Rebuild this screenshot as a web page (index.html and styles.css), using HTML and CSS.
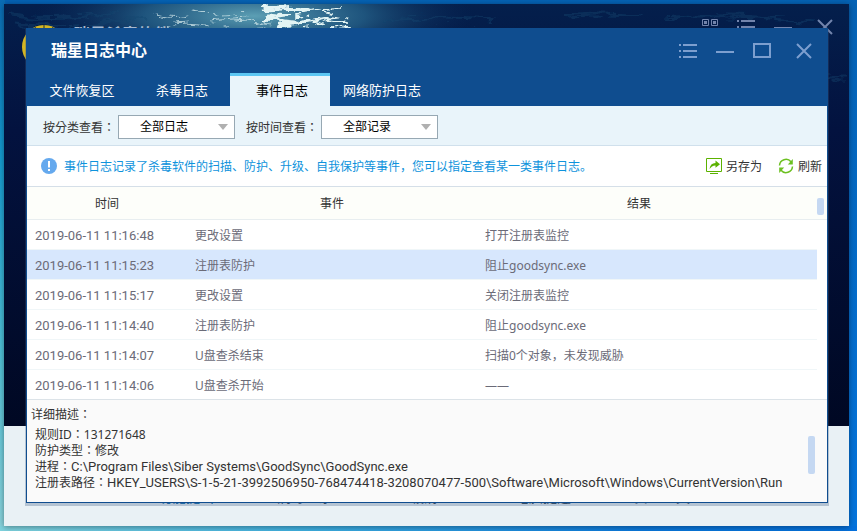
FILE: index.html
```html
<!DOCTYPE html>
<html lang="zh-CN">
<head>
    <meta charset="UTF-8">
    <meta name="viewport" content="width=device-width, initial-scale=1.0">
    <title>瑞星日志中心</title>
    <link rel="stylesheet" href="styles.css">
</head>
<body>
    <div class="main-window">
        <div class="main-banner">
            <svg class="sea" viewBox="0 0 845 422" preserveAspectRatio="none" aria-hidden="true">
                <defs>
                    <linearGradient id="deep" x1="0" y1="0" x2="0" y2="1">
                        <stop offset="0" stop-color="#041f4c"/>
                        <stop offset="0.3" stop-color="#03123f"/>
                        <stop offset="1" stop-color="#000823"/>
                    </linearGradient>
                    <radialGradient id="glow">
                        <stop offset="0" stop-color="#5c9fb4"/>
                        <stop offset="0.5" stop-color="#25628a" stop-opacity="0.8"/>
                        <stop offset="1" stop-color="#0a2c5c" stop-opacity="0"/>
                    </radialGradient>
                    <filter id="ripple" x="-5%" y="-20%" width="110%" height="140%">
                        <feTurbulence type="fractalNoise" baseFrequency="0.06 0.16" numOctaves="3" seed="4"/>
                        <feDisplacementMap in="SourceGraphic" scale="14" xChannelSelector="R" yChannelSelector="G"/>
                    </filter>
                </defs>
                <rect width="845" height="422" fill="url(#deep)"/>
                <ellipse cx="250" cy="12" rx="220" ry="50" fill="url(#glow)"/>
                <g filter="url(#ripple)" fill="none" stroke="#e2f4f4" stroke-linecap="round">
                    <path d="M190 8l28 4 26-2M206 18l36-3 24 4M150 10q20 6 34 2M160 22q26-6 44 0M220 26l40-2" stroke-width="1" opacity="0.7"/>
                    <path d="M262 6l30-2 14 3M264 13l26 3M276 21l30-5" stroke-width="5"/>
                    <path d="M292 11l22-5 14 3M300 20l24-5 20 3M320 4l14-1M300 27l26-3 20 1M250 28l30-3" stroke-width="2"/>
                </g>
                <g filter="url(#ripple)" fill="none" stroke="#12466f" stroke-width="3" opacity="0.4">
                    <path d="M4 10q40 8 110-2M10 20q50 6 130-6M380 16q50-4 110 0M560 12q30-4 80 0M660 14q60-6 150 4M802 74h40"/>
                </g>
            </svg>
            <header class="main-head">
                <svg class="main-logo" width="44" height="44" viewBox="0 0 44 44" aria-hidden="true">
                    <circle cx="22" cy="22" r="19" fill="none" stroke="#d3b523" stroke-width="6"/>
                    <path d="M22 0v8M13 2l3 7M31 2l-3 7" stroke="#1b2a38" stroke-width="1"/>
                </svg>
                <span class="main-title">瑞星杀毒软件</span>
                <div class="main-controls">
                    <svg width="16" height="7" viewBox="0 0 16 7" aria-hidden="true"><path d="M.5 .5h6v6h-6zM9.500 .5h6v6h-6z" fill="none" stroke="currentColor"/><path d="M2 2h3v3H2zM11 2h3v3h-3z" fill="currentColor"/></svg>
                    <svg width="18" height="14" viewBox="0 0 18 14" aria-hidden="true"><path d="M0 1h2v2H0zM4 1h14v2H4zM0 7h2v2H0zM4 7h14v2H4z" fill="currentColor"/></svg>
                    <svg class="low" width="18" height="2" viewBox="0 0 18 2" aria-hidden="true"><path d="M0 0h18v2H0z" fill="currentColor"/></svg>
                    <svg class="close" width="16" height="16" viewBox="0 0 16 16" aria-hidden="true"><path d="M1 1l14 14M15 1L1 15" stroke="currentColor" stroke-width="2"/></svg>
                </div>
            </header>
        </div>
        <nav class="main-nav">
            <a class="current" href="#">功能提出</a>
            <a href="#">病毒查杀</a>
            <a href="#">垃圾清理</a>
            <a href="#">电脑提速</a>
            <a href="#">安全工具</a>
        </nav>
    </div>

    <div class="log-window">
        <header class="log-head">
            <h1>瑞星日志中心</h1>
            <div class="controls">
                <button type="button" aria-label="菜单">
                    <svg width="18" height="14" viewBox="0 0 18 14"><path d="M0 0h2v2H0zM4 0h14v2H4zM0 6h2v2H0zM4 6h14v2H4zM0 12h2v2H0zM4 12h14v2H4z" fill="currentColor"/></svg>
                </button>
                <button type="button" aria-label="最小化">
                    <svg width="18" height="16" viewBox="0 0 18 16"><path d="M0 8h18v2H0z" fill="currentColor"/></svg>
                </button>
                <button type="button" aria-label="最大化">
                    <svg width="18" height="16" viewBox="0 0 18 16"><path d="M1 1h16v13H1z" fill="none" stroke="currentColor" stroke-width="2"/></svg>
                </button>
                <button type="button" class="close" aria-label="关闭">
                    <svg width="16" height="16" viewBox="0 0 16 16"><path d="M1 1l14 14M15 1L1 15" stroke="currentColor" stroke-width="2"/></svg>
                </button>
            </div>
        </header>

        <nav class="tabs">
            <button type="button">文件恢复区</button>
            <button type="button">杀毒日志</button>
            <button type="button" class="active">事件日志</button>
            <button type="button">网络防护日志</button>
        </nav>

        <form class="filters">
            <label for="kind">按分类查看：</label>
            <div class="select">
                <select id="kind">
                    <option>全部日志</option>
                </select>
            </div>
            <label for="time">按时间查看：</label>
            <div class="select">
                <select id="time">
                    <option>全部记录</option>
                </select>
            </div>
        </form>

        <div class="notice">
            <svg width="16" height="16" viewBox="0 0 16 16" aria-hidden="true"><circle cx="8" cy="8" r="8" fill="#65a9ee"/><path d="M7 3h2v6.500H7zM7 11h2v2H7z" fill="#fff"/></svg>
            <p>事件日志记录了杀毒软件的扫描、防护、升级、自我保护等事件，您可以指定查看某一类事件日志。</p>
            <div class="actions">
                <button type="button">
                    <svg width="16" height="16" viewBox="0 0 16 16" aria-hidden="true"><path d="M.5 .5h15v13H.5z" fill="none" stroke="#5cb200"/><path d="M4 15h8v1H4z" fill="#5cb200"/><path d="M3.500 11C4 7 6 5 9.500 5V2.500L14 6.200l-4.500 3.500V7.500C7 7.400 5 9 3.500 11z" fill="#5cb200"/></svg>
                    另存为
                </button>
                <button type="button">
                    <svg width="16" height="16" viewBox="0 0 16 16" aria-hidden="true"><path d="M1.500 7.500A6.500 6.500 0 0 1 13 3.800M14.500 8.500A6.500 6.500 0 0 1 3 12.200" fill="none" stroke="#6cc021" stroke-width="1.500"/><path d="M14.800 1v5.500H9.800zM1.200 15V9.500h5z" fill="#6cc021"/></svg>
                    刷新
                </button>
            </div>
        </div>

        <table>
            <thead>
                <tr>
                    <th class="col-time">时间</th>
                    <th class="col-event">事件</th>
                    <th class="col-result">结果</th>
                    <td class="col-scroll"><span class="thumb"></span></td>
                </tr>
            </thead>
            <tbody>
                <tr><td class="stamp">2019-06-11 11:16:48</td><td>更改设置</td><td>打开注册表监控</td></tr>
                <tr class="selected"><td class="stamp">2019-06-11 11:15:23</td><td>注册表防护</td><td>阻止goodsync.exe</td></tr>
                <tr><td class="stamp">2019-06-11 11:15:17</td><td>更改设置</td><td>关闭注册表监控</td></tr>
                <tr><td class="stamp">2019-06-11 11:14:40</td><td>注册表防护</td><td>阻止goodsync.exe</td></tr>
                <tr><td class="stamp">2019-06-11 11:14:07</td><td>U盘查杀结束</td><td>扫描0个对象，未发现威胁</td></tr>
                <tr><td class="stamp">2019-06-11 11:14:06</td><td>U盘查杀开始</td><td>——</td></tr>
            </tbody>
        </table>

        <section class="detail">
            <div class="detail-text">
                <h2>详细描述：</h2>
                <p>规则ID：131271648</p>
                <p>防护类型：修改</p>
                <p>进程：<span class="path">C:\Program Files\Siber Systems\GoodSync\GoodSync.exe</span></p>
                <p>注册表路径：<span class="path">HKEY_USERS\S-1-5-21-3992506950-768474418-3208070477-500\Software\Microsoft\Windows\CurrentVersion\Run</span></p>
            </div>
            <span class="thumb tall"></span>
        </section>
    </div>
</body>
</html>
```

FILE: styles.css
```css
* {
    box-sizing: border-box;
    margin: 0;
    padding: 0;
}
body {
    font-family: 'Noto Sans', 'Noto Sans CJK SC', sans-serif;
    font-size: 12px;
    min-height: 100vh;
    position: relative;
    overflow: hidden;
    color: #333;
    background:
        linear-gradient(to right, #7fd3de 0, #3fb0e0 35%, #0a78dc 75%, #0470dc 100%) bottom / 100% 5px no-repeat,
        linear-gradient(to bottom, #0a6cb4, #159bd0 30%, #4dbfd6 65%, #8ad3dc) left / 5px 100% no-repeat,
        linear-gradient(to bottom, #0562b4, #0474dc);
}
button, select {
    font: inherit;
    color: inherit;
    border: none;
    background: none;
    cursor: pointer;
}
svg {
    display: block;
    flex: none;
}

/* windows on the desktop */
.main-window {
    position: absolute;
    top: 4px;
    left: 4px;
    right: 8px;
    bottom: 5px;
    display: flex;
    flex-direction: column;
    background-color: #e9f1f5;
    box-shadow: 0 1px 6px rgba(0, 0, 0, 0.4);
}
.log-window {
    position: absolute;
    top: 28px;
    left: 26px;
    right: 29px;
    border: 1px solid #0f4d8f;
    border-top: none;
    background-color: #fff;
    box-shadow: 0 2px 0 1px rgba(60, 90, 130, 0.3);
}

.main-banner {
    position: relative;
    flex: 1;
}
.sea {
    position: absolute;
    width: 100%;
    height: 100%;
}
.main-head {
    position: relative;
    display: flex;
    padding: 15px 16px 0 18px;
    color: #7284ac;
}
.main-logo {
    margin-top: 6px;
}
.main-title {
    margin: 5px 0 0 8px;
    font-size: 16px;
    line-height: 20px;
    font-weight: bold;
    color: #a5b8cf;
}
.main-controls {
    display: flex;
    gap: 19px;
    margin-left: auto;
}
.main-controls .low {
    margin-top: 8px;
}
.main-nav {
    display: flex;
    gap: 63px;
    height: 100px;
    padding: 61px 0 0 154px;
    font-size: 14px;
    line-height: 20px;
}
.main-nav a {
    color: #34495e;
    text-decoration: none;
}
.main-nav .current {
    color: #1670b0;
}

/* title bar and tabs */
.log-head {
    display: flex;
    justify-content: space-between;
    height: 45px;
    padding: 0 15px 0 24px;
    line-height: 45px;
    background-color: #0f4d8f;
}
.log-head h1 {
    font-size: 16px;
    color: #fff;
}
.controls {
    display: flex;
    align-items: center;
    gap: 19px;
    color: #7d9fcf;
}
.close {
    margin-left: 6px;
}
.tabs {
    display: flex;
    height: 33px;
    padding-left: 3px;
    background-color: #0f4d8f;
}
.tabs button {
    width: 100px;
    padding: 0 0 4px 4px;
    border-top: 3px solid transparent;
    font-size: 13px;
    color: #fff;
}
.tabs .active {
    border-top-color: #5cc6f2;
    background-color: #e9f4fa;
    color: #000;
}

/* filters */
.filters {
    display: flex;
    align-items: center;
    height: 40px;
    padding: 2px 16px 0;
    border-bottom: 1px solid #d0e0ec;
    background-color: #e9f4fa;
}
/* full-width colons sit in the middle of their cell */
.filters label, .detail {
    font-family: 'Noto Sans', 'Noto Sans CJK TC', sans-serif;
    -webkit-locale: "zh-Hant";
}
.select {
    position: relative;
    width: 117px;
    margin: 0 11px 0 3px;
}
.select::after {
    content: '';
    position: absolute;
    top: 9px;
    right: 7px;
    border: 5px solid transparent;
    border-top: 6px solid #b0b0b0;
    pointer-events: none;
}
.select select {
    appearance: none;
    width: 100%;
    height: 24px;
    padding-left: 21px;
    border: 1px solid #97a8b3;
    background-color: #fff;
    color: #000;
}

/* notice */
.notice {
    display: flex;
    align-items: center;
    height: 41px;
    padding: 0 5px 0 14px;
    border-bottom: 1px solid #d5dfe8;
}
.notice p {
    margin-left: 7px;
    color: #0e93dc;
}
.actions {
    display: flex;
    gap: 16px;
    margin-left: auto;
}
.actions button {
    display: flex;
    align-items: center;
    gap: 4px;
}

/* log table */
table {
    width: 100%;
    table-layout: fixed;
    border-collapse: separate;
    border-spacing: 0;
}
.col-time {
    width: 160px;
}
.col-event {
    width: 290px;
}
.col-result {
    padding-right: 16px;
}
.col-scroll {
    width: 10px;
}
thead th, thead td {
    height: 33px;
    border-bottom: 1px solid #e8eef0;
    background-color: #fdfefa;
    font-weight: normal;
}
tbody td {
    height: 30px;
    padding: 1px 0 0 8px;
    border-bottom: 1px solid #f0f6f8;
    color: #6b6b78;
}
tbody .stamp {
    font-family: Roboto, sans-serif;
    font-size: 13px;
}
tbody .selected td {
    background-color: #d7e7fd;
}
.thumb {
    display: block;
    width: 7px;
    height: 17px;
    margin-top: 6px;
    border-radius: 2px;
    background-color: #c5d8f2;
}

/* detail pane */
.detail {
    display: flex;
    justify-content: space-between;
    min-height: 103px;
    margin-top: -1px;
    padding: 7px 12px 11px 4px;
    border-top: 1px solid #dce3e8;
    background-color: #fafafa;
    line-height: 16px;
}
.detail h2 {
    margin-bottom: 4px;
    font-size: 12px;
    font-weight: normal;
}
.detail p {
    padding-left: 4px;
}
.path {
    font-family: Roboto, sans-serif;
    font-size: 13px;
}
.thumb.tall {
    height: 38px;
    margin-top: 29px;
}
```
